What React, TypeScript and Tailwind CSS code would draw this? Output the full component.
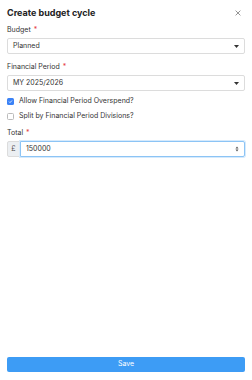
import React, { useState } from "react";

const Label: React.FC<{ text: string }> = ({ text }) => (
  <div className="text-[7px] leading-[9px] text-[#333] mb-[4px]">
    {text} <span className="text-[#e53e3e] ml-[1px]">*</span>
  </div>
);

const SelectBox: React.FC<{ value: string }> = ({ value }) => (
  <div className="h-[16px] border border-[#dcdcdc] rounded-[2px] flex items-center justify-between px-[5px] bg-white">
    <span className="text-[7px] text-[#333]">{value}</span>
    <svg width="5" height="3" viewBox="0 0 5 3">
      <path d="M0 0h5L2.5 3z" fill="#333" />
    </svg>
  </div>
);

const CheckRow: React.FC<{ checked: boolean; text: string }> = ({ checked, text }) => (
  <div className="flex items-center gap-[5px] h-[8px]">
    {checked ? (
      <div className="w-[7px] h-[7px] rounded-[1.5px] bg-[#3b82f6] flex items-center justify-center">
        <svg width="5" height="5" viewBox="0 0 10 10">
          <path d="M2 5.2l2 2L8 3" stroke="white" strokeWidth="1.6" fill="none" />
        </svg>
      </div>
    ) : (
      <div className="w-[7px] h-[7px] rounded-[1.5px] border border-[#bbb] bg-white" />
    )}
    <span className="text-[7px] text-[#333]">{text}</span>
  </div>
);

export default function App() {
  const [total] = useState("150000");
  return (
    <div
      className="w-[252px] h-[380px] bg-white flex flex-col px-[7px]"
      style={{ fontFamily: "Inter, 'Liberation Sans', sans-serif" }}
    >
      {/* header */}
      <div className="flex items-center justify-between h-[24px] pt-[1px]">
        <h1 className="text-[9px] font-bold text-[#222]">Create budget cycle</h1>
        <svg width="6" height="6" viewBox="0 0 10 10" className="mr-[4px]">
          <path d="M1 1l8 8M9 1l-8 8" stroke="#777" strokeWidth="1.3" />
        </svg>
      </div>

      <div className="mt-[1px]">
        <Label text="Budget" />
        <SelectBox value="Planned" />
      </div>

      <div className="mt-[8px]">
        <Label text="Financial Period" />
        <SelectBox value="MY 2025/2026" />
      </div>

      <div className="mt-[6px] flex flex-col gap-[7px]">
        <CheckRow checked text="Allow Financial Period Overspend?" />
        <CheckRow checked={false} text="Split by Financial Period Divisions?" />
      </div>

      <div className="mt-[8px]">
        <Label text="Total" />
        <div className="flex h-[16px]">
          <div className="w-[13px] bg-[#eceff2] border border-[#dcdcdc] rounded-l-[2px] flex items-center justify-center text-[7px] text-[#555]">
            £
          </div>
          <div className="flex-1 border border-[#8cc4f5] rounded-r-[2px] shadow-[0_0_0_1px_#d6eafc] flex items-center justify-between px-[5px]">
            <span className="text-[7px] text-[#333]">{total}</span>
            <svg width="4" height="6" viewBox="0 0 4 6">
              <path d="M0.5 2.5L2 0.5 3.5 2.5z M0.5 3.5L2 5.5 3.5 3.5z" fill="#555" />
            </svg>
          </div>
        </div>
      </div>

      <div className="flex-1" />

      <button className="h-[15px] mb-[8px] rounded-[2px] bg-[#3d9cf5] text-white text-[7px]">
        Save
      </button>
    </div>
  );
}
